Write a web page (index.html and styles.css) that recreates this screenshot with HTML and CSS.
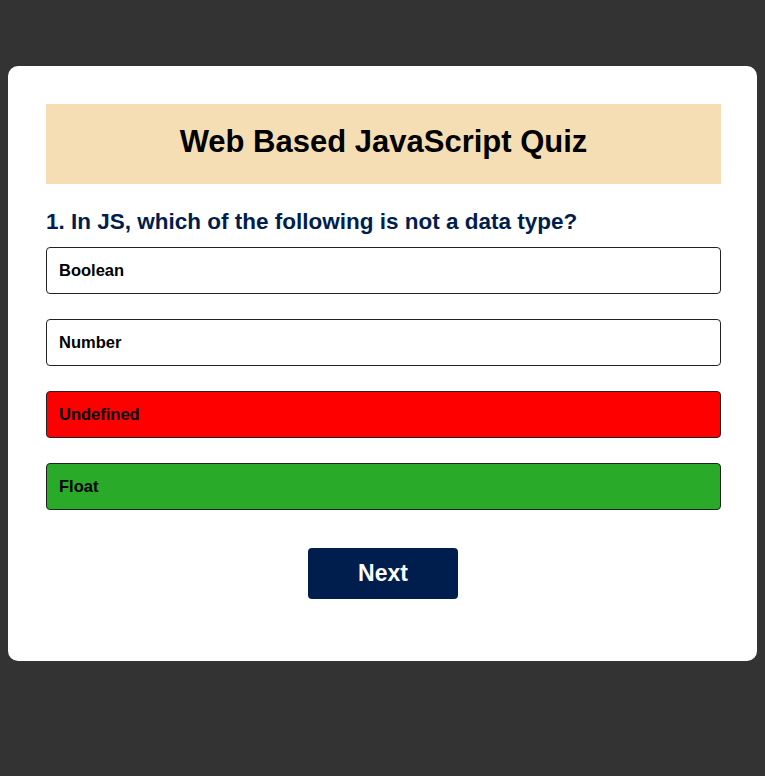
FILE: index.html
```html
<!DOCTYPE html>
<html>
<head>
<meta charset="utf-8">
<link rel="stylesheet" href="styles.css">
</head>
<body>
<div class="app">
  <h1 class="title">Web Based JavaScript Quiz</h1>
  <div class="quiz">
    <h2 class="question">1. In JS, which of the following is not a data type?</h2>
    <div class="answers">
      <button class="btn">Boolean</button>
      <button class="btn">Number</button>
      <button class="btn incorrect">Undefined</button>
      <button class="btn correct">Float</button>
    </div>
    <button class="next">Next</button>
  </div>
</div>
</body>
</html>
```

FILE: styles.css
```css
* { box-sizing: border-box; }
html, body { margin: 0; padding: 0; }
body {
  background: #333333;
  font-family: "Liberation Sans", Arial, sans-serif;
  padding: 66px 8px 0;
  height: 776px;
}
.app {
  background: #ffffff;
  border-radius: 10px;
  padding: 38px 36px 38px 38px;
  height: 595px;
}
.title {
  margin: 0;
  background: #f5deb3;
  height: 80px;
  padding: 20px 0 0;
  text-align: center;
  font-size: 31px;
  line-height: 36px;
  font-weight: bold;
  color: #000;
}
.quiz { padding-top: 24px; }
.question {
  margin: 0 0 11px;
  font-size: 22.5px;
  font-weight: bold;
  color: #001e4d;
  line-height: 28px;
}
.answers {
  display: flex;
  flex-direction: column;
  gap: 25px;
}
.btn {
  display: block;
  width: 100%;
  height: 47px;
  text-align: left;
  padding: 0 12px;
  border: 1px solid #222;
  border-radius: 4px;
  background: #fff;
  font-family: inherit;
  font-size: 16.5px;
  font-weight: bold;
  color: #000;
}
.btn.incorrect { background: #ff0000; }
.btn.correct { background: #29ab29; }
.next {
  display: block;
  margin: 38px 0 0 calc(50% - 75.5px);
  width: 150px;
  height: 51px;
  border: none;
  border-radius: 4px;
  background: #001e4d;
  color: #fff;
  font-family: inherit;
  font-size: 23px;
  font-weight: bold;
}
```
